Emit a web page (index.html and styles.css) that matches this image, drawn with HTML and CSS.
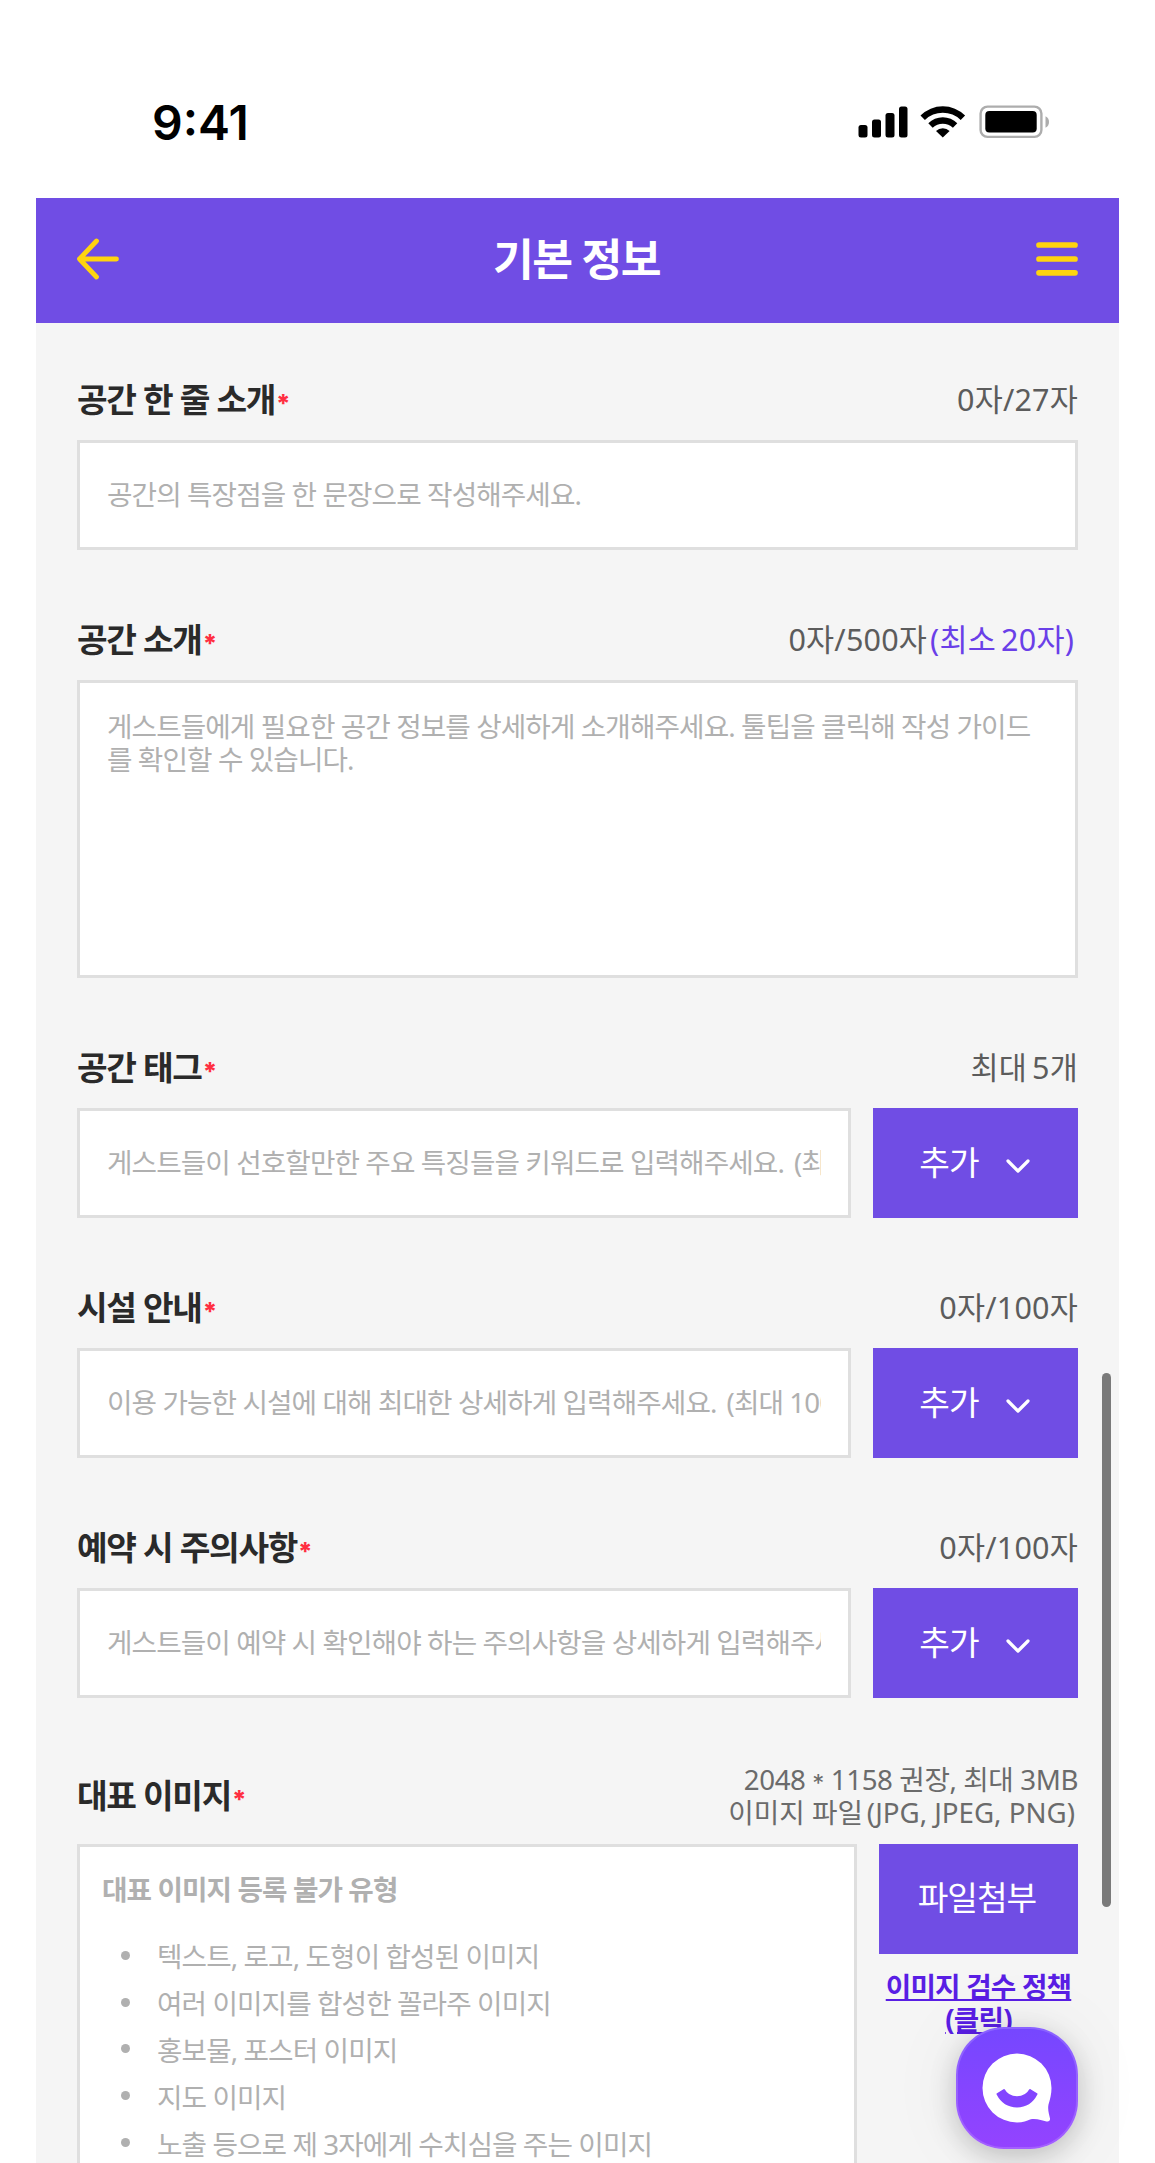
FILE: index.html
```html
<!DOCTYPE html>
<html lang="ko">
<head>
    <meta charset="UTF-8">
    <meta name="viewport" content="width=device-width, initial-scale=1.0">
    <title>기본 정보</title>

    <link rel="stylesheet" href="styles.css">
</head>
<body>
    <div class="status-bar">
        <span class="time">9:41</span>
        <svg class="status-icons" width="192" height="34" viewBox="0 0 192 34">
            <!-- signal -->
            <rect x="0.500" y="20" width="9" height="12.5" rx="2.5"/>
            <rect x="14" y="14.5" width="9" height="18" rx="2.5"/>
            <rect x="27.500" y="8" width="9" height="24.5" rx="2.5"/>
            <rect x="41" y="1.5" width="8.5" height="31" rx="2.5"/>
            <!-- wifi -->
            <path d="M62.500 10.500A31.500 31.500 0 0 1 107.100 10.500L102.700 15A25.500 25.500 0 0 0 66.900 15Z"/>
            <path d="M70.300 18.300A20.500 20.500 0 0 1 99.300 18.300L94.900 22.800A14.500 14.500 0 0 0 74.700 22.800Z"/>
            <path d="M78 26A10 10 0 0 1 91.600 26L84.800 32.500Z"/>
            <!-- battery -->
            <rect x="122.600" y="1.600" width="60.800" height="30.300" rx="7" fill="none" stroke="#adadad" stroke-width="2.400"/>
            <rect x="127.300" y="6" width="51.400" height="21.500" rx="4"/>
            <path d="M187.500 11.300Q191 13 191 17T187.500 22.700Z" fill="#adadad"/>
        </svg>
    </div>

    <div class="header">
        <svg width="44" height="42" viewBox="0 0 44 42">
            <path d="M21.500 3L4.500 21L21.500 39M4.500 21H41.500" fill="none" stroke="#ffd40f" stroke-width="4.800" stroke-linecap="round" stroke-linejoin="round"/>
        </svg>
        <h2>기본 정보</h2>
        <svg width="42" height="42" viewBox="0 0 42 42">
            <path d="M3 7H39M3 21H39M3 34.800H39" stroke="#ffd40f" stroke-width="5.700" stroke-linecap="round"/>
        </svg>
    </div>

    <form class="form" id="form">
        <div class="form-control">
            <div class="label-row">
                <label for="summary">공간 한 줄 소개<em>*</em></label>
                <span class="count">0자/27자</span>
            </div>
            <input type="text" id="summary" placeholder="공간의 특장점을 한 문장으로 작성해주세요.">
        </div>

        <div class="form-control">
            <div class="label-row">
                <label for="intro">공간 소개<em>*</em></label>
                <span class="count">0자/500자<b class="min">(최소 20자)</b></span>
            </div>
            <textarea id="intro" placeholder="게스트들에게 필요한 공간 정보를 상세하게 소개해주세요. 툴팁을 클릭해 작성 가이드를 확인할 수 있습니다."></textarea>
        </div>

        <div class="form-control">
            <div class="label-row">
                <label for="tag">공간 태그<em>*</em></label>
                <span class="count">최대 5개</span>
            </div>
            <div class="input-row">
                <input type="text" id="tag" placeholder="게스트들이 선호할만한 주요 특징들을 키워드로 입력해주세요. &thinsp;(최대 5개)">
                <button type="button" class="btn">추가
                    <svg width="26" height="16" viewBox="0 0 26 16"><path d="M3 3L13 13L23 3"/></svg>
                </button>
            </div>
        </div>

        <div class="form-control">
            <div class="label-row">
                <label for="facility">시설 안내<em>*</em></label>
                <span class="count">0자/100자</span>
            </div>
            <div class="input-row">
                <input type="text" id="facility" placeholder="이용 가능한 시설에 대해 최대한 상세하게 입력해주세요. &thinsp;(최대 100자)">
                <button type="button" class="btn">추가
                    <svg width="26" height="16" viewBox="0 0 26 16"><path d="M3 3L13 13L23 3"/></svg>
                </button>
            </div>
        </div>

        <div class="form-control">
            <div class="label-row">
                <label for="notice">예약 시 주의사항<em>*</em></label>
                <span class="count">0자/100자</span>
            </div>
            <div class="input-row">
                <input type="text" id="notice" placeholder="게스트들이 예약 시 확인해야 하는 주의사항을 상세하게 입력해주세요. (최대 100자)">
                <button type="button" class="btn">추가
                    <svg width="26" height="16" viewBox="0 0 26 16"><path d="M3 3L13 13L23 3"/></svg>
                </button>
            </div>
        </div>

        <div class="form-control">
            <div class="label-row image-label">
                <label>대표 이미지<em>*</em></label>
                <div class="guide">
                    <p>2048 <i>*</i> 1158 권장, 최대 3MB</p>
                    <p class="types">이미지 파일<span>(</span>JPG, JPEG, PNG)</p>
                </div>
            </div>
            <div class="image-row">
                <div class="image-box">
                    <h3>대표 이미지 등록 불가 유형</h3>
                    <ul>
                        <li>텍스트, 로고, 도형이 합성된 이미지</li>
                        <li>여러 이미지를 합성한 꼴라주 이미지</li>
                        <li>홍보물, 포스터 이미지</li>
                        <li>지도 이미지</li>
                        <li>노출 등으로 제 3자에게 수치심을 주는 이미지</li>
                    </ul>
                </div>
                <div class="upload">
                    <button type="button" class="btn">파일첨부</button>
                    <a href="#" class="policy">이미지 검수 정책<br>(클릭)</a>
                </div>
            </div>
        </div>
    </form>

    <div class="scrollbar"></div>

    <div class="chat">
        <svg width="122" height="122" viewBox="0 0 122 122">
            <path d="M61 26.500A34.500 34.500 0 1 0 61 95.500C67 95.500 71 93.500 74 92.500C80 91 86 93.500 90.500 94.500C93 95 94.300 93.500 94 91.500C93 87 91.500 83 92.500 77.500C94 73 95.500 67 95.500 61A34.500 34.500 0 0 0 61 26.500Z" fill="#fff"/>
            <path d="M41.500 67L48 63C53 72.500 69 72.500 74 63L80.500 67C72 83.500 50 83.500 41.500 67Z" fill="#8345ff" stroke="#8345ff" stroke-width="2" stroke-linejoin="round"/>
        </svg>
    </div>
</body>
</html>
```
FILE: styles.css
```css
*{
    margin: 0;
    padding: 0;
    box-sizing: border-box;
}

body{
    position: relative;
    width: 1155px;
    height: 2163px;
    padding: 0 36px;
    overflow: hidden;
    background: #fff;
    font-family: "Noto Sans", "Noto Sans CJK KR", sans-serif;
}

input, textarea, button{
    font-family: inherit;
}

.status-bar{
    display: flex;
    justify-content: space-between;
    align-items: center;
    height: 198px;
    padding: 46px 69px 0 116px;
}
.time{
    font-family: Inter, sans-serif;
    font-size: 48px;
    font-weight: 600;
    line-height: 58px;
    padding-top: 1px;
}

.header{
    display: flex;
    justify-content: space-between;
    align-items: center;
    height: 125px;
    padding: 0 41px 3px 39px;
    background: #704de4;
}
h2{
    color: #fff;
    font-size: 44.4px;
    font-weight: 700;
    line-height: 60px;
    letter-spacing: -1.6px;
    padding: 0 2px 1px 0;
}

.form{
    height: 1840px;
    padding: 35px 41px 0;
    background: #f5f5f5;
    overflow: hidden;
}
.form-control{
    margin-bottom: 48px;
}
.label-row{
    display: flex;
    justify-content: space-between;
    align-items: center;
    height: 82px;
}
label{
    color: #2a2a2a;
    font-size: 33.3px;
    font-weight: 700;
    line-height: 44px;
    letter-spacing: -1.3px;
}
label em{
    margin-left: 1px;
    color: #ff2f41;
    font-family: Inter, sans-serif;
    font-style: normal;
    font-size: 25px;
    font-weight: 800;
    line-height: 0;
}
.count{
    color: #5c5c5c;
    font-size: 30.5px;
    line-height: 40px;
    letter-spacing: 0.2px;
    word-spacing: -3px;
}
.min{
    color: #6a3fe8;
    font-weight: 400;
    padding: 0 4px 0 3px;
}

input, textarea{
    display: block;
    width: 100%;
    border: 3px solid #dfdfdf;
    border-radius: 0;
    background: #fff;
    font-size: 27.7px;
    letter-spacing: -0.9px;
    outline: none;
}
input{
    height: 110px;
    padding: 0 27px 2px;
}
textarea{
    height: 298px;
    padding: 27px;
    line-height: 33.3px;
    resize: none;
}
::placeholder{
    color: #b0b0b0;
    opacity: 1;
}

.input-row{
    display: flex;
    gap: 22px;
}
.input-row input{
    flex: 1;
    min-width: 0;
}
.btn{
    display: flex;
    justify-content: center;
    align-items: center;
    gap: 26px;
    width: 205px;
    height: 110px;
    border: none;
    background: #704de4;
    color: #fff;
    font-size: 33.3px;
    letter-spacing: -1px;
    padding: 0 1px 6px 0;
}
.btn path{
    fill: none;
    stroke: #fff;
    stroke-width: 3.2;
    stroke-linecap: round;
    stroke-linejoin: round;
}
.btn svg{
    margin-top: 12px;
}

.image-label{
    height: 98px;
}
.guide{
    padding-top: 2px;
    color: #6b6b6b;
    font-size: 27.7px;
    line-height: 33.3px;
    letter-spacing: -0.4px;
    text-align: right;
}
.guide i{
    font-family: Inter, sans-serif;
    font-style: normal;
    font-size: 24px;
    line-height: 0;
    vertical-align: -2px;
}
.guide .types{
    padding-right: 3px;
    letter-spacing: 0;
}
.types span{
    margin-left: 4px;
}
.image-row{
    display: flex;
    gap: 22px;
}
.image-box{
    flex: 1;
    height: 400px;
    padding: 22px;
    border: 3px solid #dfdfdf;
    background: #fff;
    color: #b0b0b0;
    font-size: 27.7px;
    letter-spacing: -0.9px;
}
h3{
    margin-bottom: 23px;
    font-size: 27.7px;
    font-weight: 700;
    line-height: 40px;
}
ul{
    list-style: none;
}
li{
    display: flex;
    align-items: center;
    gap: 27px;
    height: 46.8px;
    padding-left: 19px;
}
li::before{
    content: "";
    width: 9px;
    height: 9px;
    border-radius: 50%;
    background: #b0b0b0;
}
.upload{
    width: 199px;
    text-align: center;
}
.upload .btn{
    width: 199px;
    padding: 0 3px 8px 0;
}
.policy{
    display: block;
    margin-top: 16px;
    color: #591ee4;
    font-size: 27.7px;
    font-weight: 700;
    line-height: 33.3px;
    letter-spacing: -0.8px;
}

.scrollbar{
    position: absolute;
    top: 1373px;
    left: 1102px;
    width: 9px;
    height: 534px;
    border-radius: 5px;
    background: #7a7a7a;
}

.chat{
    position: absolute;
    top: 2027px;
    left: 956px;
    width: 122px;
    height: 122px;
    border-radius: 48px;
    background: linear-gradient(#7547ff, #9443ff);
    box-shadow: inset 0 0 0 2px rgba(255, 255, 255, 0.15), 0 8px 28px rgba(0, 0, 0, 0.2), 0 0 80px rgba(0, 0, 0, 0.06);
}
```
